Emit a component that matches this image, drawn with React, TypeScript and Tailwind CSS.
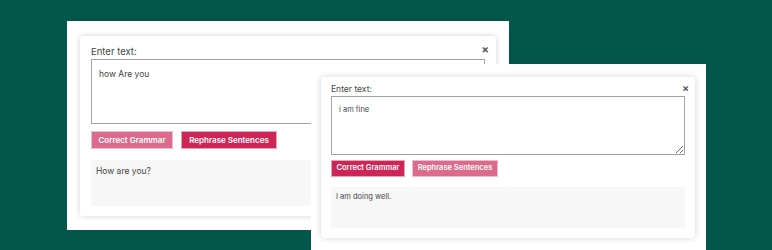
import React from "react";

type Size = "lg" | "sm";

interface PanelProps {
  size: Size;
  input: string;
  output: string;
  active: "grammar" | "rephrase";
}

const dark = "bg-[#cf2456] border-[#e7a3b7]";
const light = "bg-[#dc6a8c] border-[#f0bccb]";

function Panel({ size, input, output, active }: PanelProps) {
  const lg = size === "lg";

  return (
    <div
      className={`relative flex flex-col bg-white rounded-[3px] shadow-[0_0_6px_rgba(0,0,0,0.18)] ${
        lg ? "w-[416px] h-[180px] px-[11px] pt-[11px]" : "w-[374px] h-[161px] px-[10px] pt-[8px]"
      }`}
    >
      {/* close */}
      <span
        className={`absolute font-bold text-[#555] leading-none ${
          lg ? "right-[7px] top-[8px] text-[11px]" : "right-[6px] top-[6px] text-[10px]"
        }`}
      >
        ×
      </span>

      <div className={`text-[#444] leading-none ${lg ? "text-[9.5px] mb-[2px]" : "text-[8.5px] mb-[2px]"}`}>
        Enter text:
      </div>

      <textarea
        defaultValue={input}
        spellCheck={false}
        className={`block w-full border border-[#a3a3a3] text-[#444] outline-none ${
          lg ? "h-[65px] text-[8.5px] px-[7px] pt-[8px]" : "h-[59px] text-[7.5px] px-[7px] pt-[7px]"
        }`}
      />

      <div className={`flex ${lg ? "gap-[8px] mt-[7px]" : "gap-[7px] mt-[5px]"}`}>
        <button
          className={`border text-white font-semibold leading-none ${
            active === "grammar" ? dark : light
          } ${lg ? "w-[82px] h-[18px] text-[8px]" : "w-[74px] h-[17px] text-[7.5px]"}`}
        >
          Correct Grammar
        </button>
        <button
          className={`border text-white font-semibold leading-none ${
            active === "rephrase" ? dark : light
          } ${lg ? "w-[96px] h-[18px] text-[8px]" : "w-[86px] h-[17px] text-[7.5px]"}`}
        >
          Rephrase Sentences
        </button>
      </div>

      <div
        className={`bg-[#f7f7f7] text-[#444] leading-none ${
          lg ? "h-[46px] mt-[11px] text-[8.5px] px-[5px] pt-[7px]" : "h-[41px] mt-[10px] text-[7.5px] px-[5px] pt-[6px]"
        }`}
      >
        {output}
      </div>
    </div>
  );
}

export default function App() {
  return (
    <div
      className="relative w-[772px] h-[250px] overflow-hidden bg-[#03574a]"
      style={{ fontFamily: "Inter, 'Liberation Sans', sans-serif" }}
    >
      {/* first screenshot */}
      <div className="absolute left-[67px] top-[21px] w-[442px] h-[209px] bg-white pl-[13px] pt-[15px]">
        <Panel size="lg" input="how Are you" output="How are you?" active="rephrase" />
      </div>

      {/* second screenshot */}
      <div className="absolute left-[311px] top-[64px] w-[395px] h-[200px] bg-white pl-[10px] pt-[13px]">
        <Panel size="sm" input="i am fine" output="I am doing well." active="grammar" />
      </div>
    </div>
  );
}
